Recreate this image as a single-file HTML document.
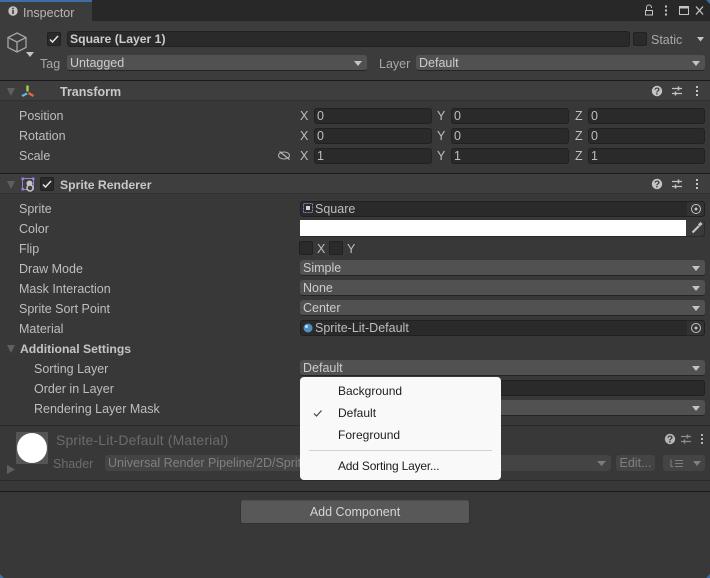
<!DOCTYPE html>
<html><head><meta charset="utf-8"><style>
*{box-sizing:border-box}
html,body{margin:0;padding:0;width:710px;height:578px;overflow:hidden;background:#383838}
body{position:relative;font-family:"Liberation Sans",sans-serif;font-size:12.5px;color:#bebebe}
.a{position:absolute}
.t{position:absolute;white-space:nowrap;line-height:16px;height:16px}
.f{position:absolute;height:16px;background:#2a2a2a;border:1px solid #212121;border-radius:3px;line-height:14px;padding-left:2px;white-space:nowrap;color:#bebebe}
.p{position:absolute;height:16px;background:#515151;border-bottom:1px solid #242424;border-radius:3px;line-height:16px;padding-left:3px;white-space:nowrap;color:#cccccc}
.p:after{content:"";position:absolute;right:5px;top:6px;border-left:4px solid transparent;border-right:4px solid transparent;border-top:5px solid #c4c4c4}
.h{position:absolute;left:0;width:710px;height:21px;background:#3e3e3e;border-top:1px solid #1a1a1a;border-bottom:1px solid #303030}
.b{font-weight:bold;font-size:12.2px}
.tri{position:absolute;border-left:4px solid transparent;border-right:4px solid transparent;border-top:8px solid #5f5f5f}
.cb{position:absolute;width:14px;height:14px;background:#2a2a2a;border:1px solid #212121;border-radius:2px}
svg{position:absolute;overflow:visible}
.m{color:#1d1d1d;position:absolute;white-space:nowrap;left:38px;line-height:16px;font-size:12px}
</style></head><body>

<!-- tab bar -->
<div class="a" style="left:0;top:0;width:710px;height:21px;background:#282828"></div>
<div class="a" style="left:0;top:0;width:92px;height:21px;background:#3c3c3c;border-top:2px solid #3a6ea5"></div>
<svg style="left:8px;top:6px" width="10" height="10"><circle cx="5" cy="5" r="4.700" fill="#c4c4c4"/><rect x="4.200" y="4" width="1.600" height="4" fill="#3c3c3c"/><rect x="4.200" y="1.800" width="1.600" height="1.500" fill="#3c3c3c"/></svg>
<div class="t" style="left:23px;top:5px;color:#b8b8b8">Inspector</div>
<svg style="left:644px;top:3px" width="60" height="14" fill="none" stroke="#c4c4c4"><rect x="1.500" y="7.500" width="7" height="4.500"/><path d="M2.500 7V4.500a2.500 2.500 0 0 1 5 0V5"/><rect x="21" y="2.500" width="2" height="2" fill="#c4c4c4" stroke="none"/><rect x="21" y="6.500" width="2" height="2" fill="#c4c4c4" stroke="none"/><rect x="21" y="10.500" width="2" height="2" fill="#c4c4c4" stroke="none"/><rect x="35.500" y="3.500" width="9" height="8"/><path d="M35 4.500h10" stroke-width="2"/><path d="M52 3.500l7 8M59 3.500l-7 8" stroke-width="1.300"/></svg>
<div class="a" style="left:706px;top:0;width:4px;height:4px;background:#3a6ea5;clip-path:polygon(0 0,100% 0,100% 100%)"></div>

<!-- object header -->
<div class="a" style="left:0;top:21px;width:710px;height:60px;background:#3c3c3c"></div>
<svg style="left:7px;top:32px" width="22" height="24" fill="none" stroke="#a4a4a4" stroke-width="1.300"><path d="M10 1l9 4.500v10L10 20l-9-4.500v-10zM1 5.500l9 4.500 9-4.500M10 10v10"/></svg>
<svg style="left:26px;top:52px" width="8" height="5"><path d="M0 0h8L4 5z" fill="#c4c4c4"/></svg>
<div class="cb" style="left:47px;top:32px"></div>
<svg style="left:49px;top:35px" width="10" height="9" fill="none" stroke="#e2e2e2" stroke-width="1.500"><path d="M1 4.500l2.500 2.500L9 1"/></svg>
<div class="f b" style="left:67px;top:31px;width:563px;color:#cccccc">Square (Layer 1)</div>
<div class="cb" style="left:633px;top:32px"></div>
<div class="t" style="left:651px;top:32px;color:#a8a8a8">Static</div>
<svg style="left:697px;top:37px" width="7" height="4"><path d="M0 0h7L3.500 4.500z" fill="#c4c4c4"/></svg>
<div class="t" style="left:40px;top:56px;color:#a8a8a8">Tag</div>
<div class="p" style="left:67px;top:55px;width:300px">Untagged</div>
<div class="t" style="left:379px;top:56px;color:#a8a8a8">Layer</div>
<div class="p" style="left:416px;top:55px;width:289px">Default</div>

<!-- Transform -->
<div class="h" style="top:80px"></div>
<div class="tri" style="left:7px;top:88px"></div>
<svg style="left:20px;top:84px" width="15" height="14" stroke-width="2.300" fill="none"><path d="M7.500 7.500V1.500" stroke="#a8d648"/><path d="M7 9.500L2 12" stroke="#5cb8e8"/><path d="M8.500 9l5 3" stroke="#e8683c"/></svg>
<div class="t b" style="left:60px;top:84px;color:#c8c8c8;font-size:12.5px">Transform</div>
<svg style="left:652px;top:85px" width="48" height="12"><circle cx="5" cy="6" r="5.200" fill="#c4c4c4"/><text x="5" y="9.500" font-size="10" font-weight="bold" text-anchor="middle" fill="#3e3e3e" font-family="Liberation Sans">?</text><path d="M20 3.500h10M20 8.500h10" stroke="#c4c4c4" stroke-width="1.300"/><path d="M26.500 1.500v4M23.500 6.500v4" stroke="#c4c4c4" stroke-width="1.500"/><rect x="44" y="1" width="2" height="2" fill="#c4c4c4"/><rect x="44" y="5" width="2" height="2" fill="#c4c4c4"/><rect x="44" y="9" width="2" height="2" fill="#c4c4c4"/></svg>

<div class="t" style="left:19px;top:108px">Position</div>
<div class="t" style="left:19px;top:128px">Rotation</div>
<div class="t" style="left:19px;top:148px">Scale</div>
<svg style="left:278px;top:150px" width="13" height="11" fill="none" stroke="#b4b4b4"><ellipse cx="6" cy="5.500" rx="5.500" ry="3.500"/><path d="M1.500 1.500l10 8" stroke-width="1.300"/></svg>

<div class="t" style="left:300px;top:108px">X</div><div class="f" style="left:314px;top:108px;width:118px">0</div>
<div class="t" style="left:437px;top:108px">Y</div><div class="f" style="left:451px;top:108px;width:118px">0</div>
<div class="t" style="left:575px;top:108px">Z</div><div class="f" style="left:588px;top:108px;width:117px">0</div>
<div class="t" style="left:300px;top:128px">X</div><div class="f" style="left:314px;top:128px;width:118px">0</div>
<div class="t" style="left:437px;top:128px">Y</div><div class="f" style="left:451px;top:128px;width:118px">0</div>
<div class="t" style="left:575px;top:128px">Z</div><div class="f" style="left:588px;top:128px;width:117px">0</div>
<div class="t" style="left:300px;top:148px">X</div><div class="f" style="left:314px;top:148px;width:118px">1</div>
<div class="t" style="left:437px;top:148px">Y</div><div class="f" style="left:451px;top:148px;width:118px">1</div>
<div class="t" style="left:575px;top:148px">Z</div><div class="f" style="left:588px;top:148px;width:117px">1</div>

<!-- Sprite Renderer -->
<div class="h" style="top:173px"></div>
<div class="tri" style="left:7px;top:181px"></div>
<svg style="left:21px;top:177px" width="15" height="15" fill="none"><rect x="1.500" y="1.500" width="11" height="11" stroke="#9a7fd8"/><rect x=".5" y=".5" width="2.500" height="2.500" fill="#9a7fd8"/><rect x="11" y=".5" width="2.500" height="2.500" fill="#9a7fd8"/><rect x=".5" y="11" width="2.500" height="2.500" fill="#9a7fd8"/><circle cx="8.500" cy="6.500" r="3" fill="#c4c4c4"/><circle cx="9" cy="11" r="3" fill="#3e3e3e" stroke="#c4c4c4" stroke-width="1.500"/></svg>
<div class="cb" style="left:40px;top:177px"></div>
<svg style="left:42px;top:180px" width="10" height="9" fill="none" stroke="#e2e2e2" stroke-width="1.500"><path d="M1 4.500l2.500 2.500L9 1"/></svg>
<div class="t b" style="left:60px;top:177px;color:#c8c8c8">Sprite Renderer</div>
<svg style="left:652px;top:178px" width="48" height="12"><circle cx="5" cy="6" r="5.200" fill="#c4c4c4"/><text x="5" y="9.500" font-size="10" font-weight="bold" text-anchor="middle" fill="#3e3e3e" font-family="Liberation Sans">?</text><path d="M20 3.500h10M20 8.500h10" stroke="#c4c4c4" stroke-width="1.300"/><path d="M26.500 1.500v4M23.500 6.500v4" stroke="#c4c4c4" stroke-width="1.500"/><rect x="44" y="1" width="2" height="2" fill="#c4c4c4"/><rect x="44" y="5" width="2" height="2" fill="#c4c4c4"/><rect x="44" y="9" width="2" height="2" fill="#c4c4c4"/></svg>

<div class="t" style="left:19px;top:201px">Sprite</div>
<div class="t" style="left:19px;top:221px">Color</div>
<div class="t" style="left:19px;top:241px">Flip</div>
<div class="t" style="left:19px;top:261px">Draw Mode</div>
<div class="t" style="left:19px;top:281px">Mask Interaction</div>
<div class="t" style="left:19px;top:301px">Sprite Sort Point</div>
<div class="t" style="left:19px;top:321px">Material</div>
<div class="tri" style="left:7px;top:345px"></div>
<div class="t b" style="left:20px;top:341px;color:#c4c4c4">Additional Settings</div>
<div class="t" style="left:34px;top:361px">Sorting Layer</div>
<div class="t" style="left:34px;top:381px">Order in Layer</div>
<div class="t" style="left:34px;top:401px">Rendering Layer Mask</div>

<div class="f" style="left:300px;top:201px;width:405px;padding-left:14px">Square</div>
<div class="a" style="left:687px;top:202px;width:17px;height:14px;background:#333;border-radius:0 3px 3px 0"></div>
<svg style="left:303px;top:203px" width="10" height="11" fill="none"><rect x=".5" y=".5" width="9" height="9" stroke="#8f78c8" stroke-dasharray="2 1"/><rect x="3" y="3" width="4" height="4" fill="#d4d4d4"/></svg>
<svg style="left:691px;top:204px" width="10" height="10" fill="none" stroke="#c4c4c4"><circle cx="5" cy="5" r="4.500"/><circle cx="5" cy="5" r="1.500" fill="#c4c4c4" stroke="none"/></svg>

<div class="a" style="left:300px;top:220px;width:405px;height:17px;background:#2a2a2a;border-radius:3px"></div>
<div class="a" style="left:300px;top:220px;width:386px;height:16px;background:#fff"></div>
<div class="a" style="left:686px;top:220px;width:18px;height:16px;background:#3a3a3a;border-radius:0 3px 3px 0"></div>
<svg style="left:691px;top:222px" width="13" height="12" fill="none"><path d="M1.500 10.500L8 4" stroke="#c4c4c4" stroke-width="2.200"/><path d="M8 3.500l2.500-2.500" stroke="#c4c4c4" stroke-width="3"/></svg>

<div class="cb" style="left:299px;top:241px"></div>
<div class="t" style="left:317px;top:241px">X</div>
<div class="cb" style="left:329px;top:241px"></div>
<div class="t" style="left:347px;top:241px">Y</div>

<div class="p" style="left:300px;top:260px;width:405px">Simple</div>
<div class="p" style="left:300px;top:280px;width:405px">None</div>
<div class="p" style="left:300px;top:300px;width:405px">Center</div>
<div class="f" style="left:300px;top:320px;width:405px;padding-left:14px;line-height:15px">Sprite-Lit-Default</div>
<div class="a" style="left:687px;top:321px;width:17px;height:14px;background:#333;border-radius:0 3px 3px 0"></div>
<svg style="left:303px;top:323px" width="10" height="10"><circle cx="5" cy="5" r="4.500" fill="#4f8fc0"/><circle cx="3.500" cy="3.500" r="1.500" fill="#c8dcec"/></svg>
<svg style="left:691px;top:323px" width="10" height="10" fill="none" stroke="#c4c4c4"><circle cx="5" cy="5" r="4.500"/><circle cx="5" cy="5" r="1.500" fill="#c4c4c4" stroke="none"/></svg>

<div class="p" style="left:300px;top:360px;width:405px">Default</div>
<div class="f" style="left:300px;top:380px;width:405px"></div>
<div class="p" style="left:300px;top:400px;width:405px"></div>

<!-- Material -->
<div class="a" style="left:0;top:425px;width:710px;height:1px;background:#2a2a2a"></div>
<div class="a" style="left:16px;top:432px;width:32px;height:32px;background:#555"></div>
<div class="a" style="left:17px;top:433px;width:30px;height:30px;border-radius:50%;background:#fff"></div>
<div class="t" style="left:56px;top:432px;color:#6c6c6c;font-size:14px;letter-spacing:.15px">Sprite-Lit-Default (Material)</div>
<div class="t" style="left:53px;top:456px;color:#6c6c6c">Shader</div>
<div class="a" style="left:105px;top:455px;width:506px;height:16px;background:#444;border-radius:3px;line-height:16px;padding-left:3px;color:#808080;white-space:nowrap;overflow:hidden">Universal Render Pipeline/2D/Sprite-Lit-Default</div>
<svg style="left:597px;top:461px" width="9" height="5"><path d="M0 0h9L4.500 5z" fill="#7c7c7c"/></svg>
<div class="a" style="left:616px;top:455px;width:39px;height:16px;background:#444;border-radius:3px;line-height:16px;text-align:center;color:#808080">Edit...</div>
<div class="a" style="left:663px;top:455px;width:42px;height:16px;background:#444;border-radius:3px"></div>
<svg style="left:670px;top:458px" width="32" height="11" fill="none" stroke="#808080"><path d="M5 2.500h8M5 5.500h8M5 8.500h8M1 1.500v7h2"/><path d="M23 3h8l-4 5z" fill="#808080" stroke="none"/></svg>
<svg style="left:7px;top:465px" width="8" height="9"><path d="M0 0l8 4.500L0 9z" fill="#5f5f5f"/></svg>
<svg style="left:664px;top:433px" width="42" height="12"><circle cx="6" cy="6" r="5.200" fill="#b4b4b4"/><text x="6" y="9.500" font-size="10" font-weight="bold" text-anchor="middle" fill="#383838" font-family="Liberation Sans">?</text><path d="M17 3.500h10M17 8.500h10" stroke="#8c8c8c" stroke-width="1.300"/><path d="M23.500 1.500v4M20.500 6.500v4" stroke="#8c8c8c" stroke-width="1.500"/><rect x="37" y="1" width="2" height="2" fill="#b4b4b4"/><rect x="37" y="5" width="2" height="2" fill="#b4b4b4"/><rect x="37" y="9" width="2" height="2" fill="#b4b4b4"/></svg>
<div class="a" style="left:0;top:480px;width:710px;height:1px;background:#2a2a2a"></div>
<div class="a" style="left:0;top:491px;width:710px;height:1px;background:#1a1a1a"></div>

<!-- Add component -->
<div class="a" style="left:240px;top:500px;width:230px;height:24px;background:#585858;border:1px solid #303030;border-top-color:#4c4c4c;border-radius:3px;text-align:center;line-height:22px;color:#d4d4d4">Add Component</div>

<!-- window corners -->
<div class="a" style="left:0;top:574px;width:4px;height:4px;background:#3a6ea5;clip-path:polygon(0 0,100% 100%,0 100%)"></div>
<div class="a" style="left:706px;top:574px;width:4px;height:4px;background:#3a6ea5;clip-path:polygon(100% 0,100% 100%,0 100%)"></div>

<!-- Menu -->
<div class="a" style="left:300px;top:377px;width:201px;height:103px;background:#f9f9f9;border-radius:4px">
<div class="m" style="top:6px">Background</div>
<svg style="left:13px;top:32px" width="10" height="9" fill="none" stroke="#444" stroke-width="1.200"><path d="M1 4.500l2.500 2.500L8.500 1.500"/></svg>
<div class="m" style="top:28px">Default</div>
<div class="m" style="top:50px">Foreground</div>
<div class="a" style="left:9px;top:73px;width:183px;height:1px;background:#d2d2d2"></div>
<div class="m" style="top:81px;letter-spacing:-.2px">Add Sorting Layer...</div>
</div>
</body></html>
